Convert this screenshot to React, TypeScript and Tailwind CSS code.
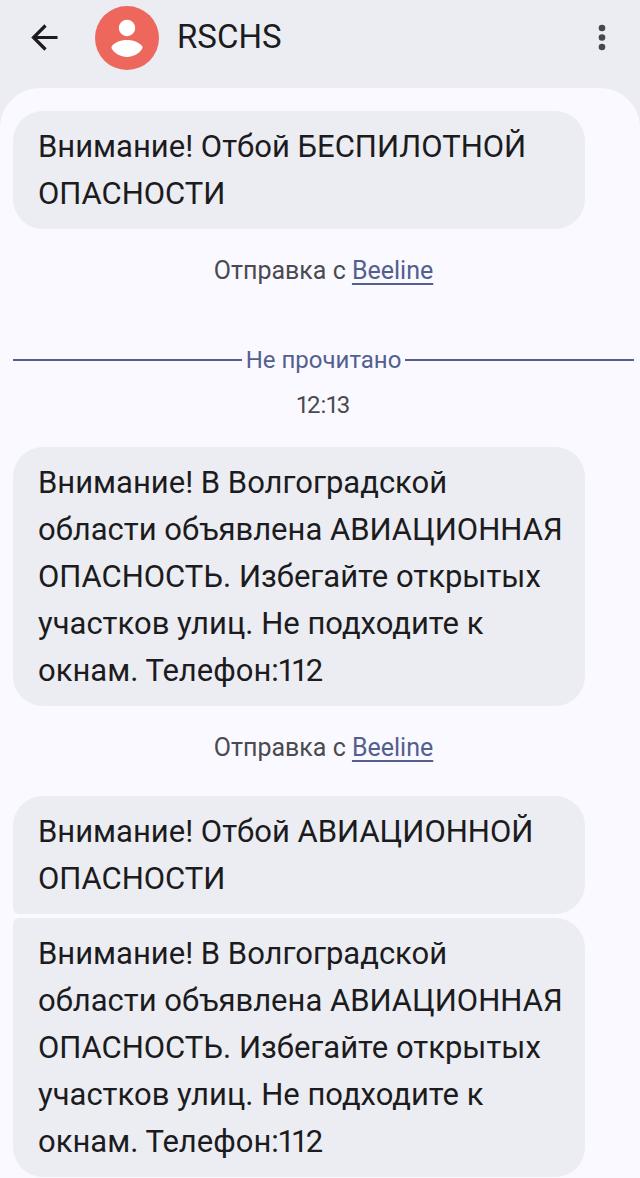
import clsx from "clsx";

const ALERT_TEXT =
    "Внимание! В Волгоградской области объявлена АВИАЦИОННАЯ ОПАСНОСТЬ. Избегайте открытых участков улиц. Не подходите к окнам. Телефон:112";

type BubbleProps = {
    text: string;
    className?: string;
};

function Bubble({ text, className }: BubbleProps) {
    return (
        <p
            className={clsx(
                "mr-[49px] rounded-[30px] bg-[#ecedf2] py-3 pl-[25px] pr-4 text-[31px] leading-[47px] text-[#1b1b20]",
                className
            )}
        >
            {text}
        </p>
    );
}

function SentVia({ className }: { className?: string }) {
    return (
        <p className={clsx("text-center text-[25px] leading-8 text-[#4a4a50]", className)}>
            Отправка с{" "}
            <a
                href="#beeline"
                className="text-[#53608f] underline decoration-2 underline-offset-4 [text-decoration-skip-ink:none]"
            >
                Beeline
            </a>
        </p>
    );
}

export default function App() {
    return (
        <div className="min-h-screen bg-[#ecedf2] font-[Roboto,sans-serif] proportional-nums">
            {/* Header */}
            <header className="flex h-[88px] items-start pl-[25px] pr-[18px] pt-[6px]">
                <button type="button" aria-label="Назад" className="mt-3 size-10">
                    <svg viewBox="0 0 40 40" className="size-10" fill="none" stroke="#1b1b20" strokeWidth="3.2">
                        <path d="M32.5 19.5H9M20.500 7.500L8.500 19.500l12 12" />
                    </svg>
                </button>

                <svg viewBox="0 0 64 64" className="ml-[30px] size-16" aria-hidden="true">
                    <circle cx="32" cy="32" r="32" fill="#ed675c" />
                    <circle cx="32" cy="22" r="8.2" fill="#fff" />
                    <path
                        d="M32 34c7 0 12.5 2.6 15 6.1.7 1 .7 2 0 3C44 47.7 38.5 51 32 51s-12-3.300-15-7.900c-.7-1-.7-2 0-3C19.5 36.6 25 34 32 34z"
                        fill="#fff"
                    />
                </svg>

                <h1 className="ml-[18px] flex-1 text-[33px] leading-[62px] text-[#1b1b20]">RSCHS</h1>

                <button type="button" aria-label="Меню" className="mt-3 size-10">
                    <svg viewBox="0 0 40 40" className="size-10" fill="#47474c">
                        <circle cx="20" cy="10" r="3.3" />
                        <circle cx="20" cy="19.5" r="3.3" />
                        <circle cx="20" cy="29" r="3.3" />
                    </svg>
                </button>
            </header>

            {/* Messages */}
            <main className="rounded-t-[40px] bg-[#faf9ff] pb-px pl-[13px] pr-[6px] pt-[23px]">
                <Bubble text="Внимание! Отбой БЕСПИЛОТНОЙ ОПАСНОСТИ" />
                <SentVia className="mt-[26px]" />

                {/* Unread divider */}
                <div className="mt-[57px] flex items-center gap-1 text-2xl leading-8 text-[#53608f]">
                    <span className="h-[2px] flex-1 bg-[#53608f]" />
                    Не прочитано
                    <span className="h-[2px] flex-1 bg-[#53608f]" />
                </div>
                <time className="mt-[13px] block text-center text-2xl leading-8 text-[#4a4a50]">12:13</time>

                <Bubble text={ALERT_TEXT} className="mt-[26px]" />
                <SentVia className="mt-[26px]" />

                {/* Grouped messages share a tight left edge */}
                <Bubble text="Внимание! Отбой АВИАЦИОННОЙ ОПАСНОСТИ" className="mt-8 rounded-bl-[6px]" />
                <Bubble text={ALERT_TEXT} className="mt-1 rounded-tl-[6px]" />
            </main>
        </div>
    );
}
